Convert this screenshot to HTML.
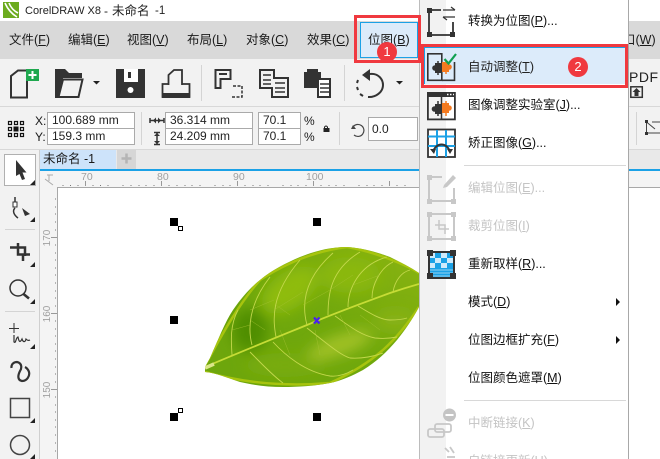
<!DOCTYPE html>
<html><head><meta charset="utf-8">
<style>
html,body{margin:0;padding:0;background:#fff}
#p{position:relative;width:660px;height:459px;overflow:hidden;background:#fff;font-family:"Liberation Sans","Noto Sans CJK SC",sans-serif;color:#1a1a1a}
.a{position:absolute}
.t{position:absolute;white-space:nowrap;font-size:13px;line-height:16px}
.u{text-decoration:underline}
.in{position:absolute;background:#fff;border:1px solid #aaa;box-sizing:border-box;font-size:12px;line-height:15px;padding-left:4px;white-space:nowrap;color:#222}
.m{position:absolute;left:468px;font-size:12.5px;line-height:16px;white-space:nowrap;color:#111}
.d{color:#c4c4c4}
.h{position:absolute;width:8px;height:8px;background:#000}
.r{position:absolute;font-size:10px;color:#a0a0a0;line-height:10px}
svg{position:absolute;overflow:visible}
</style></head><body><div id="p">

<!-- title bar -->
<div class="a" style="left:3px;top:2px;width:16px;height:16px;background:#6cab1e"></div>
<svg style="left:3px;top:2px" width="16" height="16"><path d="M2 1C5 8 9 12 14 15M6 1C8 6 11 9 15 11" stroke="#fff" stroke-width="1.6" fill="none"/></svg>
<div class="t" style="left:25px;top:3px;font-size:11px;color:#222">CorelDRAW X8</div>
<div class="t" style="left:104px;top:3px;font-size:12px;color:#222">-</div>
<div class="t" style="left:112px;top:3px;font-size:12.5px;color:#222">未命名</div>
<div class="t" style="left:155px;top:3px;font-size:11.5px;color:#222">-1</div>

<!-- menu bar -->
<div class="a" style="left:0;top:21px;width:660px;height:38px;background:#d9d9d9"></div>
<div class="t" style="left:9px;top:32px;font-size:12.5px">文件(<span class="u">F</span>)</div>
<div class="t" style="left:68px;top:32px;font-size:12.5px">编辑(<span class="u">E</span>)</div>
<div class="t" style="left:127px;top:32px;font-size:12.5px">视图(<span class="u">V</span>)</div>
<div class="t" style="left:187px;top:32px;font-size:12.5px">布局(<span class="u">L</span>)</div>
<div class="t" style="left:246px;top:32px;font-size:12.5px">对象(<span class="u">C</span>)</div>
<div class="t" style="left:307px;top:32px;font-size:12.5px">效果(<span class="u">C</span>)</div>
<div class="a" style="left:360px;top:22px;width:58px;height:36px;background:#dcebfa;border:1px solid #1ba1e6;box-sizing:border-box"></div>
<div class="t" style="left:368px;top:32px;font-size:12.5px">位图(<span class="u">B</span>)</div>
<div class="t" style="left:623px;top:32px;font-size:12.5px">口(<span class="u">W</span>)</div>

<!-- standard toolbar -->
<div class="a" style="left:0;top:59px;width:660px;height:47px;background:#f2f2f2;border-bottom:1px solid #d8d8d8"></div>
<svg style="left:0;top:59px" width="360" height="47">
<path d="M11 38.500V17L18 11.500H27V38.500Z" fill="none" stroke="#333" stroke-width="2"/>
<rect x="26" y="10" width="13" height="12" fill="#1fa84f"/><path d="M32.500 12v8M28.500 16h8" stroke="#fff" stroke-width="2"/>
<path d="M55 39V10H65L69 14H82V19H63L60 39Z" fill="#333"/><path d="M63 20.500H82.500L78.500 38H58.500Z" fill="#f2f2f2" stroke="#333" stroke-width="2"/>
<path d="M93 22h7l-3.500 3.500z" fill="#222"/>
<rect x="116" y="10" width="29" height="29" fill="#333"/><rect x="124" y="10" width="14" height="13" fill="#fff"/><rect x="128" y="13" width="3" height="6" fill="#333"/><circle cx="130.500" cy="31" r="3" fill="#fff"/>
<path d="M168.500 26V16L174 11H182V26M168 25H162.500V38H189.500V25H182" fill="none" stroke="#333" stroke-width="1.800"/><rect x="162" y="34" width="28" height="5" fill="#333"/>
<path d="M201.500 6V42" stroke="#d4d4d4"/>
<path d="M215.500 11H230.500V20H220.500V29H215.500Z" fill="none" stroke="#333" stroke-width="2"/><path d="M219 15h8" stroke="#333" stroke-width="2"/><path d="M233 27h9v11h-10" fill="none" stroke="#333" stroke-width="1.500" stroke-dasharray="3 1.500"/>
<path d="M260 11H274V19H288V38H272V29H260Z" fill="none" stroke="#333" stroke-width="2"/><path d="M263 16h8M263 21h8M263 25h8M275 24h10M275 29h10M275 33h10" stroke="#333" stroke-width="1.500"/>
<path d="M304 13H307V10H318V13H321V29H304Z" fill="#333"/><rect x="318" y="20" width="12" height="18" fill="#fff" stroke="#333" stroke-width="2"/><path d="M320 25h9M320 29h9M320 33h9" stroke="#333" stroke-width="1.500"/>
</svg>
<svg style="left:330px;top:59px" width="110" height="47">
<path d="M14.500 6V42" stroke="#d4d4d4"/>
<path d="M40 15C48 14 53 20 53 26C53 33 46 38.500 38 38" fill="none" stroke="#333" stroke-width="2"/>
<path d="M33 37L30 35M28 31L27 28M27 24L28 21" stroke="#333" stroke-width="2"/>
<path d="M40 10L32 16L40 22Z" fill="#333"/>
<path d="M66 22h7l-3.500 3.500z" fill="#222"/>
</svg>
<div class="t" style="left:629px;top:69px;font-size:14px;letter-spacing:.5px;color:#222">PDF</div>
<svg style="left:630px;top:86px" width="14" height="12"><rect x=".8" y=".8" width="11.500" height="10.500" fill="none" stroke="#333" stroke-width="1.500"/><path d="M6.500 2L2.500 6h2v4h4V6h2z" fill="#333"/></svg>

<!-- property bar -->
<div class="a" style="left:0;top:107px;width:660px;height:42px;background:#f2f2f2;border-bottom:1px solid #d8d8d8"></div>
<svg style="left:8px;top:121px" width="16" height="16"><g fill="none" stroke="#111" stroke-width="1.200"><rect x=".5" y=".5" width="3" height="3"/><rect x="6.500" y=".5" width="3" height="3"/><rect x="12.500" y=".5" width="3" height="3"/><rect x=".5" y="6.500" width="3" height="3"/><rect x="12.500" y="6.500" width="3" height="3"/><rect x=".5" y="12.500" width="3" height="3"/><rect x="6.500" y="12.500" width="3" height="3"/><rect x="12.500" y="12.500" width="3" height="3"/></g><rect x="5.500" y="5.500" width="5" height="5" fill="#111"/></svg>
<div class="t" style="left:35px;top:113px;font-size:12px">X:</div>
<div class="t" style="left:35px;top:129px;font-size:12px">Y:</div>
<div class="in" style="left:47px;top:112px;width:88px;height:17px">100.689 mm</div>
<div class="in" style="left:47px;top:128px;width:88px;height:17px">159.3 mm</div>
<div class="a" style="left:141px;top:112px;width:1px;height:33px;background:#d4d4d4"></div>
<svg style="left:149px;top:113px" width="16" height="32"><path d="M1 7.500H15M1 5V10M15 5V10" stroke="#333" stroke-width="1.500"/><path d="M7 4.500L4 7.500L7 10.500ZM9 4.500L12 7.500L9 10.500Z" fill="#333"/><path d="M8 20V32M5 19.500H11M5 31.500H11" stroke="#333" stroke-width="1.500"/><path d="M5 23L8 20L11 23ZM5 28L8 31L11 28Z" fill="#333"/></svg>
<div class="in" style="left:165px;top:112px;width:88px;height:17px">36.314 mm</div>
<div class="in" style="left:165px;top:128px;width:88px;height:17px">24.209 mm</div>
<div class="in" style="left:258px;top:112px;width:43px;height:17px">70.1</div>
<div class="in" style="left:258px;top:128px;width:43px;height:17px">70.1</div>
<div class="t" style="left:304px;top:113px;font-size:12px">%</div>
<div class="t" style="left:304px;top:129px;font-size:12px">%</div>
<svg style="left:323px;top:125px" width="7" height="8"><path d="M1.500 3V2Q3 0 4.500 2V3" fill="none" stroke="#222"/><rect x="0.500" y="3" width="6" height="4" fill="#222"/></svg>
<div class="a" style="left:339px;top:112px;width:1px;height:33px;background:#d4d4d4"></div>
<svg style="left:350px;top:122px" width="16" height="16"><path d="M3 5A6 6 0 1 1 4 13" fill="none" stroke="#444" stroke-width="1.200"/><path d="M1 7L6 7L3 3Z" fill="#444"/></svg>
<div class="in" style="left:368px;top:117px;width:50px;height:24px;padding-left:3px;line-height:22px">0.0</div>
<svg style="left:645px;top:120px" width="15" height="15"><path d="M1.500 2V13H15M1.500 2L10 9M7 2H15" fill="none" stroke="#444"/><rect y="0" width="3" height="3" fill="#333"/><rect y="12" width="3" height="3" fill="#333"/></svg>
<div class="a" style="left:636px;top:112px;width:1px;height:33px;background:#d4d4d4"></div>

<!-- tab row -->
<div class="a" style="left:40px;top:150px;width:620px;height:19px;background:#e9e9e9"></div>
<div class="a" style="left:40px;top:150px;width:76px;height:19px;background:#cde3fa"></div>
<div class="t" style="left:43px;top:151px;font-size:12.5px">未命名 -1</div>
<div class="a" style="left:117px;top:150px;width:19px;height:19px;background:#d6d6d6"></div>
<svg style="left:120px;top:152px" width="13" height="13"><path d="M6.500 1.500v10M1.500 6.500h10" stroke="#b4b4b4" stroke-width="2.500"/></svg>
<div class="a" style="left:40px;top:169px;width:620px;height:2px;background:#1ba1e6"></div>

<!-- left tools -->
<div class="a" style="left:0;top:150px;width:39px;height:309px;background:#f2f2f2;border-right:1px solid #cfcfcf"></div>
<div class="a" style="left:4px;top:154px;width:32px;height:32px;background:#fff;border:1px solid #b0b0b0;box-sizing:border-box"></div>
<svg style="left:0;top:150px" width="40" height="309">
<path d="M16 10L26.500 22.500H22.500L25 29L22 30L19.500 24L16 26Z" fill="#333"/>
<path d="M35 30V35H30Z M35 67V72H30Z M35 112V117H30Z M35 149V154H30Z M35 194V199H30Z M35 268V273H30Z M35 304V309H30Z" fill="#222"/>
<path d="M15 47V52M15 58C12 61 14 65 18 68" fill="none" stroke="#333" stroke-width="1.500"/><rect x="13" y="52" width="4" height="5" fill="#fff" stroke="#333"/><path d="M22 58L30 64L25 66Z" fill="#333"/>
<path d="M5 79.500H35" stroke="#d4d4d4"/>
<path d="M10 97.500H25V106M18 93V104.500H30" fill="none" stroke="#333" stroke-width="2.500"/><path d="M23 105V111" stroke="#333" stroke-width="2.500"/>
<circle cx="18" cy="138" r="8" fill="none" stroke="#333" stroke-width="1.500"/><path d="M23.500 144L29 148.500" stroke="#333" stroke-width="2.500"/>
<path d="M5 161.500H35" stroke="#d4d4d4"/>
<path d="M14 173V183M9 178.500H19" stroke="#333"/><path d="M14 185V192C16 194 16 187 18 187C19 192 20 193 22 189C23 192 25 193 26 189C27 190 28 191 30 190" fill="none" stroke="#333" stroke-width="1.200"/>
<path d="M11.500 218C11 214 14 212 17 212C22 213 22 218 20 221C18 225 17 230 22 231C27 231 30 226 29 222C28 219 27 218 25 217" fill="none" stroke="#333" stroke-width="2.200"/>
<rect x="10.500" y="248.500" width="19" height="19" fill="none" stroke="#444" stroke-width="1.500"/>
<circle cx="20" cy="295" r="9.500" fill="none" stroke="#444" stroke-width="1.500"/>
</svg>

<!-- rulers -->
<div class="a" style="left:40px;top:171px;width:620px;height:16px;background:#f4f4f4"></div>
<div class="a" style="left:40px;top:171px;width:17px;height:288px;background:#f4f4f4"></div>
<div class="a" style="left:57px;top:187px;width:603px;height:1px;background:#a8a8a8"></div>
<div class="a" style="left:57px;top:187px;width:1px;height:272px;background:#a8a8a8"></div>
<svg style="left:40px;top:171px" width="620" height="288">
<path d="M7 4H13M9 4V10M5 8L13 14" stroke="#aaa" fill="none"/>
<path d="M45.500 10V15M121.500 10V15M197.500 10V15M273.500 10V15M349.500 10V15" stroke="#999"/>
<path d="M23 14V15M30.500 14V15M38 14V15M53 14V15M60.500 14V15M68 14V15M83 14V15M91 14V15M99 14V15M106 14V15M114 14V15M129 14V15M137 14V15M145 14V15M152 14V15M160 14V15M175 14V15M183 14V15M190 14V15M205 14V15M213 14V15M220 14V15M228 14V15M243 14V15M251 14V15M258 14V15M266 14V15M281 14V15M289 14V15M296 14V15M304 14V15M319 14V15M327 14V15M334 14V15M342 14V15M357 14V15M365 14V15" stroke="#777"/>
<path d="M11 66.500H17M11 142.500H17M11 218.500H17" stroke="#999"/>
<path d="M15 28H16M15 36H16M15 43H16M15 51H16M15 59H16M15 74H16M15 82H16M15 89H16M15 97H16M15 104H16M15 112H16M15 120H16M15 127H16M15 135H16M15 150H16M15 158H16M15 165H16M15 173H16M15 180H16M15 188H16M15 196H16M15 203H16M15 211H16M15 226H16M15 234H16M15 241H16M15 249H16M15 256H16M15 264H16M15 272H16M15 280H16" stroke="#777"/>
</svg>
<div class="r" style="left:81px;top:172px;font-size:10.500px">70</div>
<div class="r" style="left:157px;top:172px;font-size:10.500px">80</div>
<div class="r" style="left:233px;top:172px;font-size:10.500px">90</div>
<div class="r" style="left:306px;top:172px;font-size:10.500px">100</div>
<div class="r" style="left:38px;top:233px;transform:rotate(-90deg);width:20px;text-align:center">170</div>
<div class="r" style="left:38px;top:309px;transform:rotate(-90deg);width:20px;text-align:center">160</div>
<div class="r" style="left:38px;top:385px;transform:rotate(-90deg);width:20px;text-align:center">150</div>

<!-- leaf -->
<svg style="left:190px;top:230px" width="240" height="160" viewBox="0 0 240 160">
<defs>
<linearGradient id="g1" x1="0" y1="1" x2="1" y2="0"><stop offset="0" stop-color="#6ca50c"/><stop offset=".5" stop-color="#70a80c"/><stop offset="1" stop-color="#8fb612"/></linearGradient>
<filter id="b" x="-30%" y="-30%" width="160%" height="160%"><feGaussianBlur stdDeviation="7"/></filter>
<clipPath id="c"><path d="M15 137L20 128C28 110 35 92 43 80C52 67 60 58 70 50C82 40 96 33 110 27C125 21 140 17 157 17C172 18 187 22 200 27C210 32 220 37 229 43V77C222 90 215 100 207 110C197 122 186 132 173 140C160 147 150 151 140 153C125 156 108 157 93 157C78 157 63 155 50 152C38 148 26 143 15 142Z"/></clipPath>
</defs>
<g clip-path="url(#c)">
<rect width="240" height="160" fill="url(#g1)"/>
<g filter="url(#b)">
<ellipse cx="100" cy="60" rx="32" ry="18" fill="#8fbc10" transform="rotate(-35 100 60)"/>
<ellipse cx="160" cy="45" rx="30" ry="18" fill="#8ab80e"/>
<ellipse cx="60" cy="100" rx="18" ry="22" fill="#4f8e06"/>
<ellipse cx="95" cy="135" rx="40" ry="12" fill="#78ac0c"/>
<ellipse cx="150" cy="115" rx="34" ry="10" fill="#a2c228" transform="rotate(-20 150 115)"/>
<ellipse cx="205" cy="90" rx="20" ry="10" fill="#88b214"/>
</g>
<path d="M15 135C20 128 43 80 70 50C96 33 125 21 157 17C187 22 220 37 229 43M15 142C50 152 93 157 140 153C186 132 207 110 229 77" fill="none" stroke="#a7c40e" stroke-width="2.500"/>
<g fill="none" stroke="#c3d84c" stroke-width=".9">
<path d="M42 125C41 110 40 95 48 80M62 115C58 100 58 75 80 47M86 107C83 90 80 65 110 30M117 95C113 80 110 52 143 23M138 85C138 65 140 40 170 22M158 77C158 60 168 35 197 27M182 68C182 55 190 38 203 32M203 62C205 50 212 42 220 40"/>
<path d="M60 122C70 132 82 145 93 153M83 112C95 125 115 142 140 146C150 147 158 143 163 140M117 98C135 112 150 125 160 128C172 129 185 126 193 123M145 86C158 95 170 105 185 108C195 109 202 108 207 107M168 76C178 82 190 90 200 90C208 90 214 89 217 88"/>
</g>
<g fill="none" stroke="#a4c232" stroke-width=".5" opacity=".8">
<path d="M60 80L84 70M60 95L42 100M84 80L113 62M113 75L140 60M140 60L163 45M163 55L190 45M75 100L60 90M100 85L86 75M100 125L90 100M130 125L125 100M160 105L150 85M190 100L170 85"/>
</g>
<path d="M15 137C60 118 85 108 117 95C140 85 167 75 200 63C212 59 222 56 229 54" fill="none" stroke="#c6dc36" stroke-width="1.800"/>
<path d="M15 138L24 134" stroke="#dbe68a" stroke-width="3.500"/>
</g>
<path d="M124 87.500L129.500 93.500M129.500 87.500L124 93.500" stroke="#4a22ee" stroke-width="2.200"/>
</svg>

<!-- handles -->
<div class="h" style="left:170px;top:218px"></div>
<div class="a" style="left:178px;top:226px;width:5px;height:5px;background:#fff;border:1px solid #000;box-sizing:border-box"></div>
<div class="h" style="left:313px;top:218px"></div>
<div class="h" style="left:170px;top:316px"></div>
<div class="h" style="left:170px;top:413px"></div>
<div class="a" style="left:178px;top:408px;width:5px;height:5px;background:#fff;border:1px solid #000;box-sizing:border-box"></div>
<div class="h" style="left:313px;top:413px"></div>

<!-- menu -->
<div class="a" style="left:419px;top:0;width:210px;height:459px;background:#fff;border-left:1px solid #bcbcbc;border-right:1px solid #a8a8a8;box-sizing:border-box"></div>
<div class="a" style="left:420px;top:0;width:26px;height:459px;background:#f2f2f2"></div>
<div class="a" style="left:424px;top:47px;width:202px;height:37px;background:#dcebfa;border-top:1px solid #1ba1e6;border-right:1px solid #1ba1e6;border-left:1px solid #1ba1e6;box-sizing:border-box"></div>

<svg style="left:420px;top:0" width="36" height="459">
<!-- 转换为位图 -->
<path d="M9 10V35H33V22M9 10H21" fill="none" stroke="#333" stroke-width="1.800"/>
<path d="M23 10H35M35 10L31 7M23 17H35M23 17L27 20" fill="none" stroke="#333" stroke-width="1.200"/>
<rect x="7" y="8" width="5" height="5" fill="#333"/><rect x="7" y="32" width="5" height="5" fill="#333"/><rect x="30" y="32" width="5" height="5" fill="#333"/>
<!-- 自动调整 -->
<rect x="7.800" y="53.800" width="14" height="26.500" fill="none" stroke="#333" stroke-width="1.600"/><path d="M22 80.300H34.500V62" fill="none" stroke="#333" stroke-width="1.600"/>
<rect x="15" y="63" width="7" height="10" fill="#333"/><circle cx="15" cy="68" r="2.800" fill="#333"/><path d="M18 61v14" stroke="#333" stroke-width="1.500"/>
<rect x="22" y="62" width="7" height="10" fill="#f47a1f"/><circle cx="29" cy="67" r="2.800" fill="#f47a1f"/><path d="M26 60v14" stroke="#f47a1f" stroke-width="1.500"/>
<path d="M24.500 59L28.500 63.500L36 54" fill="none" stroke="#10a050" stroke-width="2.200"/>
<!-- 图像调整实验室 -->
<rect x="7.900" y="92.900" width="27" height="26.500" fill="none" stroke="#333" stroke-width="1.800"/><rect x="7" y="92" width="28" height="5" fill="#333"/>
<path d="M27 94.500h1.500M30 94.500h1.500M33 94.500h1" stroke="#fff" stroke-width="1.500"/><path d="M21.500 97V119" stroke="#333" stroke-width="1.500"/>
<rect x="15" y="104" width="7" height="10" fill="#333"/><circle cx="14.500" cy="109" r="2.800" fill="#333"/><path d="M18 101v15" stroke="#333" stroke-width="1.500"/>
<rect x="22" y="103" width="7" height="10" fill="#f47a1f"/><circle cx="29" cy="108" r="2.800" fill="#f47a1f"/><path d="M26 101v15" stroke="#f47a1f" stroke-width="1.500"/>
<!-- 矫正图像 -->
<rect x="8" y="129.500" width="27" height="27.500" fill="#fff" stroke="#333" stroke-width="1.800"/>
<path d="M8 136.500H35M8 146H35M17 130V157M26 130V157" stroke="#1ba1e6" stroke-width="2"/>
<path d="M13 152C16 142 27 142 30 152" fill="none" stroke="#333" stroke-width="2"/><path d="M10 149L14 154L16 149ZM27 149L33 149L30 154Z" fill="#333"/>
<!-- 编辑位图 -->
<path d="M9 178V201H34V188M9 177H22" fill="none" stroke="#c8c8c8" stroke-width="2"/><rect x="7" y="175" width="5" height="5" fill="#c8c8c8"/><rect x="7" y="199" width="5" height="5" fill="#c8c8c8"/><rect x="31" y="199" width="5" height="5" fill="#c8c8c8"/>
<path d="M24 185L33 175L36 178L27 187L23 188Z" fill="#c8c8c8"/>
<!-- 裁剪位图 -->
<rect x="9" y="214" width="25" height="25" fill="none" stroke="#c8c8c8" stroke-width="2"/>
<rect x="7" y="212" width="5" height="5" fill="#c8c8c8"/><rect x="31" y="212" width="5" height="5" fill="#c8c8c8"/><rect x="7" y="236" width="5" height="5" fill="#c8c8c8"/><rect x="31" y="236" width="5" height="5" fill="#c8c8c8"/>
<path d="M15 225H25V234M19 220V229H29" fill="none" stroke="#c8c8c8" stroke-width="1.500"/>
<!-- 重新取样 -->
<rect x="9" y="253" width="25" height="25" fill="#1ba1e6"/>
<path d="M9 253h6v5H9zM21 253h6v5h-6zM15 258h6v5h-6zM27 258h6v5h-6zM9 263h6v5H9zM21 263h6v5h-6z" fill="#cfeafb"/>
<path d="M9 270h25M9 273h25M9 276h25" stroke="#bfe3f8" stroke-width=".8"/>
<rect x="9" y="251" width="25" height="2" fill="#333"/><rect x="9" y="277" width="25" height="2" fill="#333"/><rect x="8" y="251" width="2" height="28" fill="#333"/><rect x="33" y="251" width="2" height="28" fill="#333"/>
<rect x="7" y="250" width="6" height="6" fill="#333"/><rect x="30" y="250" width="6" height="6" fill="#333"/><rect x="7" y="273" width="6" height="6" fill="#333"/><rect x="30" y="273" width="6" height="6" fill="#333"/>
<!-- 中断链接 -->
<circle cx="29.500" cy="415" r="6.500" fill="#c4c4c4"/><path d="M25.500 415H33.500" stroke="#fff" stroke-width="2"/>
<rect x="8" y="429" width="16" height="8" rx="2" fill="none" stroke="#c8c8c8" stroke-width="1.800"/><rect x="15" y="424" width="16" height="8" rx="2" fill="none" stroke="#c8c8c8" stroke-width="1.800"/>
<!-- 自链接更新 -->
<path d="M25 448L29 452M30 447L34 453M27 457L35 457" stroke="#c8c8c8" stroke-width="1.800" fill="none"/>
</svg>

<div class="m" style="top:13px">转换为位图(<span class="u">P</span>)...</div>
<div class="m" style="top:59px;color:#222">自动调整(<span class="u">T</span>)</div>
<div class="m" style="top:97px">图像调整实验室(<span class="u">J</span>)...</div>
<div class="m" style="top:135px">矫正图像(<span class="u">G</span>)...</div>
<div class="a" style="left:464px;top:165px;width:162px;height:1px;background:#d8d8d8"></div>
<div class="m d" style="top:180px">编辑位图(<span class="u">E</span>)...</div>
<div class="m d" style="top:218px">裁剪位图(<span class="u">I</span>)</div>
<div class="m" style="top:256px">重新取样(<span class="u">R</span>)...</div>
<div class="m" style="top:294px">模式(<span class="u">D</span>)</div>
<div class="m" style="top:332px">位图边框扩充(<span class="u">F</span>)</div>
<div class="m" style="top:370px">位图颜色遮罩(<span class="u">M</span>)</div>
<div class="a" style="left:464px;top:400px;width:162px;height:1px;background:#d8d8d8"></div>
<div class="m d" style="top:415px">中断链接(<span class="u">K</span>)</div>
<div class="m d" style="top:453px">自链接更新(<span class="u">U</span>)</div>
<svg style="left:616px;top:298px" width="5" height="48"><path d="M0 0L4 4L0 8Z M0 38L4 42L0 46Z" fill="#111"/></svg>

<!-- annotations on top -->
<div class="a" style="left:354px;top:15px;width:67px;height:48px;border:3px solid #f0393f;box-sizing:border-box"></div>
<div class="a" style="left:377px;top:42px;width:20px;height:20px;border-radius:50%;background:#f0393f;color:#fff;font-size:13px;line-height:20px;text-align:center">1</div>
<div class="a" style="left:421px;top:44px;width:207px;height:44px;border:3px solid #f0393f;box-sizing:border-box"></div>
<div class="a" style="left:568px;top:57px;width:20px;height:20px;border-radius:50%;background:#f0393f;color:#fff;font-size:13px;line-height:20px;text-align:center">2</div>

</div></body></html>
